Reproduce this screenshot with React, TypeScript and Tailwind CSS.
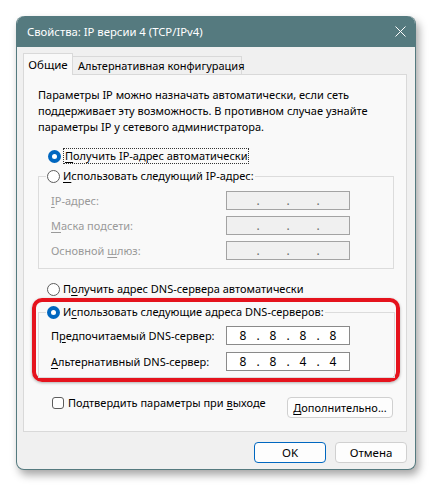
import React from "react";

// Underlines the access-key letter of a dialog label
function Mn({ t, k }: { t: string; k: number }) {
  return (
    <>
      {t.slice(0, k)}
      <span className="underline decoration-1 underline-offset-[2px]">{t[k]}</span>
      {t.slice(k + 1)}
    </>
  );
}

function Radio({ on }: { on?: boolean }) {
  return on ? (
    <span className="flex h-[13px] w-[13px] shrink-0 items-center justify-center rounded-full bg-[#0067c0]">
      <span className="h-[5px] w-[5px] rounded-full bg-white" />
    </span>
  ) : (
    <span className="h-[13px] w-[13px] shrink-0 rounded-full border border-[#5d5d5d] bg-white" />
  );
}

function IpBox({ parts, disabled }: { parts: string[]; disabled?: boolean }) {
  return (
    <div
      className={
        disabled
          ? "flex h-[19px] w-[124px] items-center border border-[#a3a3a3] bg-[#f0f0f0] px-[2px] text-[12px] text-[#6e6e6e]"
          : "flex h-[19px] w-[124px] items-center border border-[#8a8a8a] bg-white px-[2px] text-[12px] text-black"
      }
    >
      {[0, 1, 2, 3].map((i) => (
        <React.Fragment key={i}>
          {i > 0 && <span className="flex w-[2px] justify-center">.</span>}
          <span className="w-[28px] text-center">{parts[i]}</span>
        </React.Fragment>
      ))}
    </div>
  );
}

function Row({
  label,
  parts,
  disabled,
}: {
  label: React.ReactNode;
  parts: string[];
  disabled?: boolean;
}) {
  return (
    <div className="flex h-[19px] items-center">
      <span className={disabled ? "w-[175px] text-[#9a9a9a]" : "w-[175px] text-black"}>{label}</span>
      <IpBox parts={parts} disabled={disabled} />
    </div>
  );
}

export default function App() {
  const empty = ["", "", "", ""];
  return (
    <div className="min-h-[487px] w-[432px] bg-white pl-4 pt-4 font-['Noto_Sans',sans-serif] text-[11px] leading-[16px] text-black">
      <div className="flex h-[454px] w-[400px] flex-col rounded-[8px] border border-t-0 border-[#557a7f] bg-[#f0f0f0] shadow-[3px_5px_8px_rgba(0,0,0,0.35)]">
        {/* title bar */}
        <div className="flex h-[31px] items-center justify-between rounded-t-[8px] bg-[#557a7f] pl-[10px] pr-[10px] text-[11.3px] text-white">
          <span>Свойства: IP версии 4 (TCP/IPv4)</span>
          <svg width="11" height="11" viewBox="0 0 11 11" className="mr-[-1px]">
            <path d="M0.5 0.5 L10.5 10.5 M10.5 0.5 L0.5 10.5" stroke="white" strokeWidth="1" fill="none" />
          </svg>
        </div>

        {/* tabs */}
        <div className="flex flex-col px-[6px] pr-[8px] pt-[6px]">
          <div className="relative z-10 flex items-end">
            <div className="mb-[-1px] flex h-[22px] w-[50px] items-center justify-center border border-b-0 border-[#d9d9d9] bg-[#f9f9f9] text-[11.5px]">
              Общие
            </div>
            <div className="flex h-[18px] w-[169px] items-center whitespace-nowrap border border-b-0 border-l-0 border-[#d9d9d9] bg-[#f0f0f0] pl-[5px]">
              Альтернативная конфигурация
            </div>
          </div>

          {/* tab panel */}
          <div className="flex h-[358px] flex-col border border-[#d9d9d9] bg-[#f9f9f9] pt-[12px]">
            <div className="px-[14px]">
              <div>Параметры IP можно назначать автоматически, если сеть</div>
              <div>поддерживает эту возможность. В противном случае узнайте</div>
              <div>параметры IP у сетевого администратора.</div>
            </div>

            <div className="mt-[13px] flex h-[16px] items-center gap-[2px] pl-[24px]">
              <Radio on />
              <span className="border border-dotted border-[#333] px-[1px] leading-[14px]">
                <Mn t="Получить IP-адрес автоматически" k={0} />
              </span>
            </div>

            <fieldset className="ml-[14px] mr-[12px] mt-[4px] border border-[#dcdcdc]">
              <legend className="ml-[7px] flex h-[16px] items-center gap-[3px] px-[1px]">
                <Radio />
                <span>
                  <Mn t="Использовать следующий IP-адрес:" k={0} />
                </span>
              </legend>
              <div className="flex flex-col gap-[6px] pb-[8px] pl-[12px] pt-[7px]">
                <Row label={<Mn t="IP-адрес:" k={0} />} parts={empty} disabled />
                <Row label={<Mn t="Маска подсети:" k={0} />} parts={empty} disabled />
                <Row label={<Mn t="Основной шлюз:" k={9} />} parts={empty} disabled />
              </div>
            </fieldset>

            <div className="mt-[12px] flex h-[16px] items-center gap-[3px] pl-[23px]">
              <Radio />
              <span>
                <Mn t="Получить адрес DNS-сервера автоматически" k={1} />
              </span>
            </div>

            <div className="ml-[8px] mr-[6px] mt-[1px] rounded-[10px] border-[4px] border-[#e5131d] shadow-[0_1px_3px_rgba(0,0,0,0.3)]">
              <fieldset className="ml-[2px] mr-[1px] mt-[2px] border border-[#dcdcdc]">
                <legend className="ml-[7px] flex h-[16px] items-center gap-[3px] px-[1px]">
                  <Radio on />
                  <span>
                    <Mn t="Использовать следующие адреса DNS-серверов:" k={1} />
                  </span>
                </legend>
                <div className="flex flex-col gap-[7px] pb-[6px] pl-[12px] pt-[6px]">
                  <Row label={<Mn t="Предпочитаемый DNS-сервер:" k={1} />} parts={["8", "8", "8", "8"]} />
                  <Row label={<Mn t="Альтернативный DNS-сервер:" k={0} />} parts={["8", "8", "4", "4"]} />
                </div>
              </fieldset>
            </div>

            <div className="mt-[13px] flex items-start justify-between pl-[28px] pr-[13px]">
              <div className="flex h-[16px] items-center gap-[4px]">
                <span className="h-[12px] w-[12px] rounded-[3px] border border-[#5d5d5d] bg-white" />
                <span>
                  Подтвердить параметры при <Mn t="выходе" k={0} />
                </span>
              </div>
              <div className="mt-[2px] flex h-[21px] w-[106px] items-center justify-center rounded-[4px] border border-[#d0d0d0] bg-[#fdfdfd]">
                <Mn t="Дополнительно..." k={0} />
              </div>
            </div>
          </div>

          {/* dialog buttons */}
          <div className="mt-[10px] flex justify-end gap-[9px]">
            <div className="flex h-[21px] w-[72px] items-center justify-center rounded-[4px] border border-[#0067c0] bg-[#fdfdfd] text-[11.5px]">
              OK
            </div>
            <div className="flex h-[21px] w-[72px] items-center justify-center rounded-[4px] border border-[#d0d0d0] bg-[#fdfdfd] text-[11.5px]">
              Отмена
            </div>
          </div>
        </div>
      </div>
    </div>
  );
}
